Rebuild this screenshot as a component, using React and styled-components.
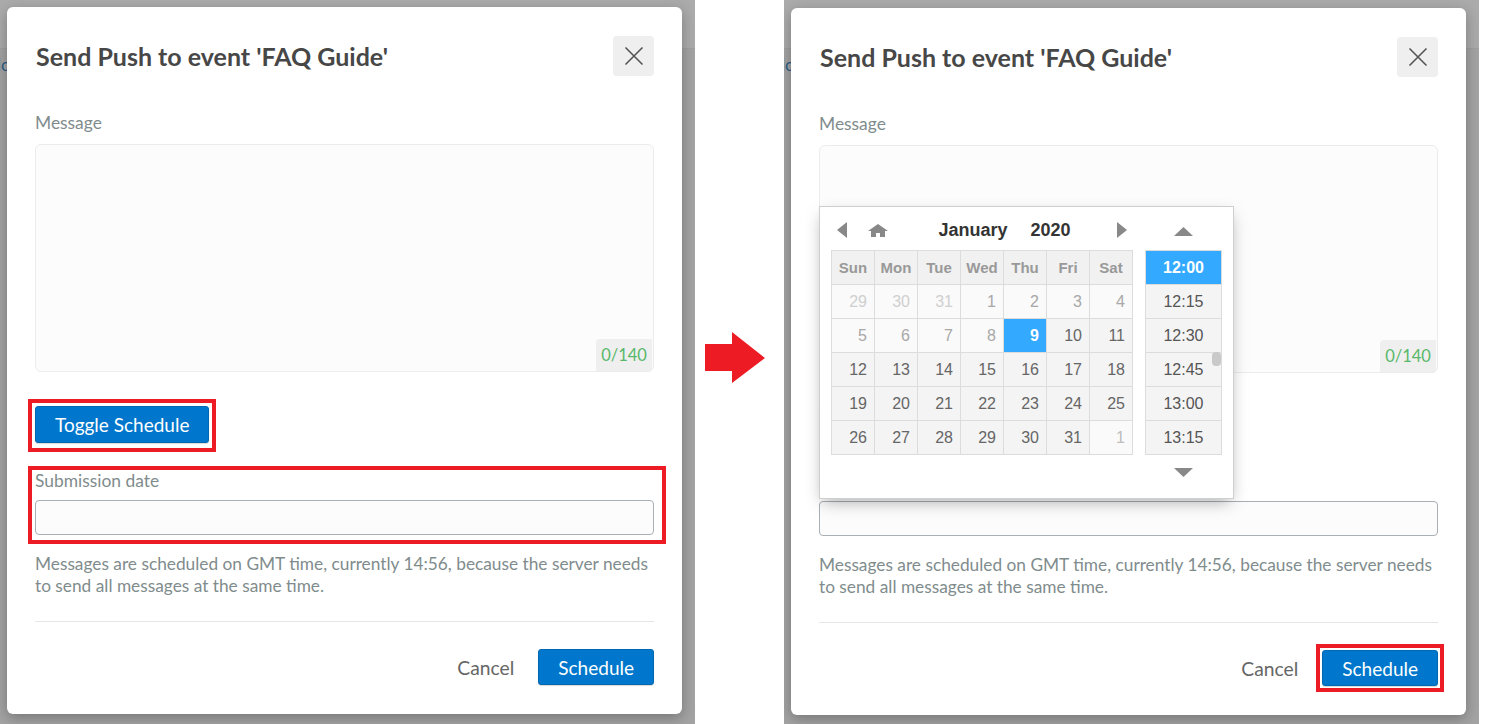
import styled, { createGlobalStyle } from "styled-components";

const GlobalStyle = createGlobalStyle`
  html, body {
    margin: 0;
    padding: 0;
    background: #fff;
  }
  body {
    font-family: Lato, "Open Sans", sans-serif;
  }
  * {
    box-sizing: border-box;
  }
`;

const Page = styled.div`
  display: flex;
  width: 1489px;
  height: 724px;
  background: #fff;
  overflow: hidden;
`;

const Screen = styled.div`
  position: relative;
  flex: 0 0 695px;
  height: 724px;
  background: #a3a3a3;
  overflow: hidden;
`;

const PageBar = styled.div`
  height: 49px;
  background: #ababab;
  border-bottom: 1px solid #9e9e9e;
`;

const PageText = styled.div`
  margin: 5px 0 0 -3px;
  font-size: 17px;
  color: #2d5e88;
`;

const ArrowGap = styled.div`
  flex: 0 0 89px;
  display: flex;
  align-items: center;
  padding: 0 0 8px 10px;
`;

const Modal = styled.div`
  position: absolute;
  top: ${(p) => p.$top}px;
  left: 7px;
  width: 675px;
  height: 707px;
  background: #fff;
  border-radius: 6px;
  box-shadow: 0 4px 14px rgba(0, 0, 0, 0.28);
  padding: 29px 28px 0;
  display: flex;
  flex-direction: column;
`;

const Header = styled.div`
  display: flex;
  align-items: center;
  justify-content: space-between;
  height: 40px;
`;

const Title = styled.h2`
  margin: 0;
  padding-left: 1px;
  font-size: 25px;
  font-weight: 700;
  color: #474747;
`;

const CloseButton = styled.button`
  width: 41px;
  height: 40px;
  padding: 0;
  border: none;
  border-radius: 4px;
  background: #efefef;
  display: flex;
  align-items: center;
  justify-content: center;
`;

const FieldLabel = styled.label`
  display: block;
  margin-top: ${(p) => p.$gap || 0}px;
  font-size: 17.4px;
  line-height: 22px;
  color: #7f8c8d;
`;

const MessageBox = styled.div`
  position: relative;
  margin-top: 10px;
  height: 228px;
  border: 1px solid #ececec;
  border-radius: 6px;
  background: #fcfcfc;
`;

const Counter = styled.span`
  position: absolute;
  right: 1px;
  bottom: 0;
  width: 56px;
  height: 32px;
  background: #efefef;
  border-top-left-radius: 4px;
  color: #58b86a;
  font-size: 16.5px;
  display: flex;
  align-items: center;
  justify-content: center;
`;

const Highlight = styled.div`
  border: 4px solid ${(p) => (p.$on ? "#ed1c24" : "transparent")};
`;

const ToggleFrame = styled(Highlight)`
  align-self: flex-start;
  margin: 27px 0 0 -7px;
  padding: 3px 3px 5px;
`;

const DateFrame = styled(Highlight)`
  margin: 14px -12px 0 -7px;
  padding: 0 8px 5px 3px;
`;

const DateInput = styled.div`
  margin-top: 8px;
  height: 35px;
  border: 1px solid #a9b0b5;
  border-radius: 4px;
  background: #fcfcfc;
`;

const HelpText = styled.p`
  margin: 9px 0 0;
  font-size: 17.3px;
  line-height: 22px;
  color: #7f8c8d;
`;

const Divider = styled.div`
  margin-top: 24px;
  height: 1px;
  background: #e6e6e6;
`;

const Footer = styled.div`
  margin-top: 21px;
  display: flex;
  justify-content: flex-end;
  align-items: center;
  gap: 18px;
  margin-right: -6px;
`;

const ScheduleFrame = styled(Highlight)`
  padding: 2px;
`;

const CancelButton = styled.button`
  border: none;
  background: none;
  padding: 0;
  font-family: inherit;
  font-size: 19.3px;
  color: #666;
`;

const PrimaryButton = styled.button`
  height: ${(p) => p.$h || 37}px;
  padding: 0 19px;
  border: 1px solid #0068b3;
  border-radius: 3px;
  background: #0077cc;
  box-shadow: 0 1px 1px rgba(0, 0, 0, 0.15);
  color: #fff;
  font-family: inherit;
  font-size: 19px;
  display: block;
`;

/* datetime picker */

const Picker = styled.div`
  position: absolute;
  left: 28px;
  top: 198px;
  width: 415px;
  height: 293px;
  background: #fff;
  border: 1px solid #cfcfcf;
  box-shadow: 0 6px 16px -4px rgba(0, 0, 0, 0.35);
  padding: 0 11px;
  display: flex;
  gap: 12px;
  font-family: "Liberation Sans", Arial, sans-serif;
`;

const Calendar = styled.div`
  width: 302px;
`;

const Nav = styled.div`
  height: 43px;
  padding-top: 3px;
  display: flex;
  align-items: center;
`;

const NavButton = styled.span`
  flex: 0 0 ${(p) => p.$w || 22}px;
  margin-left: ${(p) => p.$ml || 0}px;
  display: flex;
  align-items: center;
  justify-content: center;
`;

const MonthLabel = styled.div`
  flex: 1;
  padding-left: 10px;
  display: flex;
  justify-content: center;
  gap: 23px;
  font-size: 18px;
  font-weight: 700;
  color: #333;
`;

const DayGrid = styled.div`
  display: grid;
  grid-template-columns: repeat(7, 42px);
  grid-auto-rows: 33px;
  gap: 1px;
  background: #dcdcdc;
  border: 1px solid #dcdcdc;
`;

const DayHead = styled.div`
  background: #f1f1f1;
  color: #999;
  font-size: 15px;
  font-weight: 700;
  display: flex;
  align-items: center;
  justify-content: center;
`;

const dayTones = {
  other: { bg: "#fafafa", fg: "#cfcfcf" },
  past: { bg: "#fafafa", fg: "#a8a8a8" },
  next: { bg: "#fafafa", fg: "#bdbdbd" },
  normal: { bg: "#f4f4f4", fg: "#666" },
  selected: { bg: "#33aaff", fg: "#fff" },
};

const Day = styled.div`
  background: ${(p) => dayTones[p.$tone].bg};
  color: ${(p) => dayTones[p.$tone].fg};
  font-weight: ${(p) => (p.$tone === "selected" ? 700 : 400)};
  font-size: 16px;
  line-height: 33px;
  text-align: right;
  padding-right: 7px;
`;

const TimeColumn = styled.div`
  width: 78px;
  display: flex;
  flex-direction: column;
`;

const TimeArrow = styled.div`
  height: ${(p) => p.$h}px;
  display: flex;
  justify-content: center;
  align-items: ${(p) => (p.$up ? "flex-end" : "center")};
  padding-bottom: ${(p) => (p.$up ? 14 : 0)}px;
`;

const TimeList = styled.div`
  position: relative;
  height: 205px;
  border: 1px solid #dcdcdc;
  background: #f4f4f4;
`;

const TimeItem = styled.div`
  height: 34px;
  border-bottom: 1px solid #dcdcdc;
  background: ${(p) => (p.$active ? "#33aaff" : "transparent")};
  color: ${(p) => (p.$active ? "#fff" : "#555")};
  font-weight: ${(p) => (p.$active ? 700 : 400)};
  font-size: 16px;
  display: flex;
  align-items: center;
  justify-content: center;
  &:last-child {
    border-bottom: none;
  }
`;

const ScrollThumb = styled.span`
  position: absolute;
  right: 0;
  top: 101px;
  width: 9px;
  height: 14px;
  border-radius: 4px;
  background: #c9c9c9;
`;

function Triangle({ dir, w, h }) {
  const pts = {
    left: `${w},0 ${w},${h} 0,${h / 2}`,
    right: `0,0 0,${h} ${w},${h / 2}`,
    up: `0,${h} ${w},${h} ${w / 2},0`,
    down: `0,0 ${w},0 ${w / 2},${h}`,
  }[dir];
  return (
    <svg width={w} height={h} viewBox={`0 0 ${w} ${h}`}>
      <polygon points={pts} fill="#888" />
    </svg>
  );
}

function HomeIcon() {
  return (
    <svg width="20" height="13" viewBox="0 0 20 13">
      <path d="M10 0 L20 7 L17 7 L17 13 L12 13 L12 9 L8 9 L8 13 L3 13 L3 7 L0 7 Z" fill="#888" />
    </svg>
  );
}

function CloseIcon() {
  return (
    <svg width="20" height="20" viewBox="0 0 20 20">
      <path d="M1.5 1.5 L18.5 18.5 M18.5 1.5 L1.5 18.5" stroke="#555" strokeWidth="1.6" />
    </svg>
  );
}

function RedArrow() {
  return (
    <svg width="60" height="52" viewBox="0 0 60 52">
      <polygon points="0,12 27,12 27,0 60,26 27,51 27,39 0,39" fill="#ed1c24" />
    </svg>
  );
}

const weekDays = ["Sun", "Mon", "Tue", "Wed", "Thu", "Fri", "Sat"];

const days = [
  [29, "other"], [30, "other"], [31, "other"], [1, "past"], [2, "past"], [3, "past"], [4, "past"],
  [5, "past"], [6, "past"], [7, "past"], [8, "past"], [9, "selected"], [10, "normal"], [11, "normal"],
  ...Array.from({ length: 20 }, (_, i) => [12 + i, "normal"]),
  [1, "next"],
];

const times = ["12:00", "12:15", "12:30", "12:45", "13:00", "13:15"];

function DatePicker() {
  return (
    <Picker>
      <Calendar>
        <Nav>
          <NavButton>
            <Triangle dir="left" w={10} h={16} />
          </NavButton>
          <NavButton $w={20} $ml={15}>
            <HomeIcon />
          </NavButton>
          <MonthLabel>
            <span>January</span>
            <span>2020</span>
          </MonthLabel>
          <NavButton>
            <Triangle dir="right" w={10} h={16} />
          </NavButton>
        </Nav>
        <DayGrid>
          {weekDays.map((d) => (
            <DayHead key={d}>{d}</DayHead>
          ))}
          {days.map(([n, tone], i) => (
            <Day key={i} $tone={tone}>
              {n}
            </Day>
          ))}
        </DayGrid>
      </Calendar>
      <TimeColumn>
        <TimeArrow $up $h={43}>
          <Triangle dir="up" w={19} h={9} />
        </TimeArrow>
        <TimeList>
          {times.map((t, i) => (
            <TimeItem key={t} $active={i === 0}>
              {t}
            </TimeItem>
          ))}
          <ScrollThumb />
        </TimeList>
        <TimeArrow $h={35}>
          <Triangle dir="down" w={19} h={9} />
        </TimeArrow>
      </TimeColumn>
    </Picker>
  );
}

function PushModal({ top, step }) {
  const opened = step === 2;
  return (
    <Modal $top={top}>
      <Header>
        <Title>Send Push to event 'FAQ Guide'</Title>
        <CloseButton>
          <CloseIcon />
        </CloseButton>
      </Header>

      <FieldLabel $gap={36}>Message</FieldLabel>
      <MessageBox>
        <Counter>0/140</Counter>
      </MessageBox>

      <ToggleFrame $on={!opened}>
        <PrimaryButton>Toggle Schedule</PrimaryButton>
      </ToggleFrame>

      <DateFrame $on={!opened}>
        <FieldLabel>Submission date</FieldLabel>
        <DateInput />
      </DateFrame>

      <HelpText>
        Messages are scheduled on GMT time, currently 14:56, because the server needs to send all
        messages at the same time.
      </HelpText>

      <Divider />

      <Footer>
        <CancelButton>Cancel</CancelButton>
        <ScheduleFrame $on={opened}>
          <PrimaryButton $h={36}>Schedule</PrimaryButton>
        </ScheduleFrame>
      </Footer>

      {opened && <DatePicker />}
    </Modal>
  );
}

export default function App() {
  return (
    <>
      <GlobalStyle />
      <Page>
        <Screen>
          <PageBar />
          <PageText>lo</PageText>
          <PushModal top={7} step={1} />
        </Screen>
        <ArrowGap>
          <RedArrow />
        </ArrowGap>
        <Screen>
          <PageBar />
          <PageText>lo</PageText>
          <PushModal top={8} step={2} />
        </Screen>
      </Page>
    </>
  );
}
